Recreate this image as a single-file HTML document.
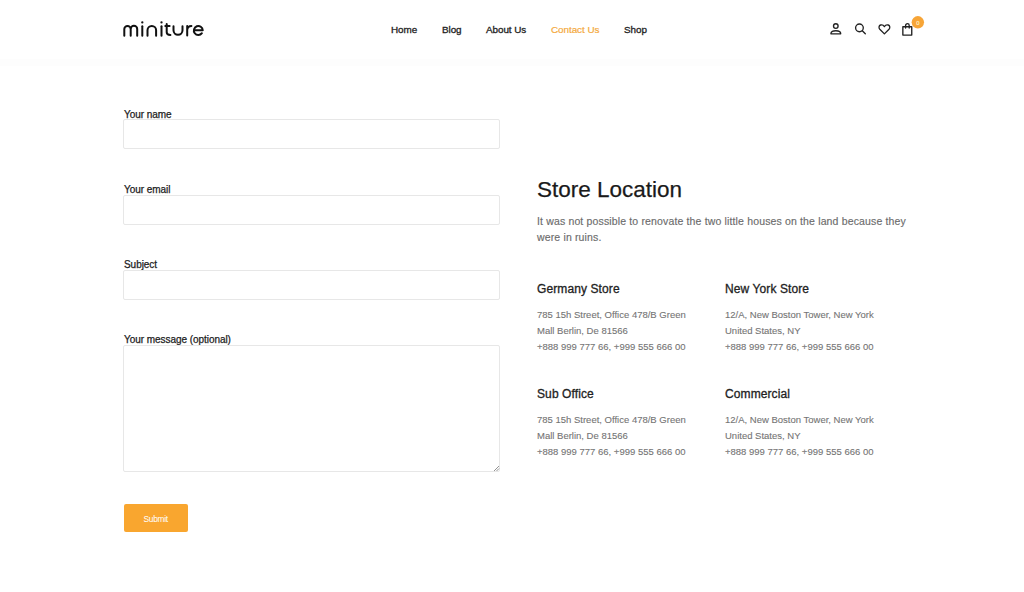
<!DOCTYPE html>
<html><head><meta charset="utf-8">
<style>
*{margin:0;padding:0;box-sizing:border-box}
html,body{width:1024px;height:592px;overflow:hidden;background:#fff;font-family:"Liberation Sans",sans-serif;color:#1b1b1b}
.abs{position:absolute;white-space:nowrap}
.hdr{position:absolute;left:0;top:59px;width:1024px;height:7px;background:#fdfdfd}
.nav{font-size:9.9px;line-height:12px;color:#222;font-weight:normal;-webkit-text-stroke:0.3px #222;margin-top:0.5px;letter-spacing:-0.05px}
.lbl{font-size:10px;line-height:12px;color:#222;-webkit-text-stroke:0.25px #222;margin-top:1px;letter-spacing:-0.05px}
.inp{position:absolute;left:123px;width:377px;height:30px;border:1px solid #e7e7e7;border-radius:2px}
.h2{font-size:22.5px;line-height:24px;color:#1a1a1a;-webkit-text-stroke:0.25px #1a1a1a}
.p{font-size:10.5px;line-height:16px;color:#6c6c6c;letter-spacing:0.15px;-webkit-text-stroke:0.15px #6c6c6c}
.h4{font-size:12px;line-height:14px;color:#222;-webkit-text-stroke:0.3px #222;margin-top:1px;letter-spacing:0.1px}
.ad{font-size:9.5px;line-height:16px;color:#747474;-webkit-text-stroke:0.1px #747474}
</style></head><body>
<div class="hdr"></div>
<!-- logo -->
<svg width="1024" height="61" style="position:absolute;left:0;top:0" viewBox="0 0 1024 61">
<g fill="none" stroke="#111" stroke-width="2" stroke-linecap="round" stroke-linejoin="round">
<path d="M124.3 35.8V29.1A3.2 3.2 0 0 1 130.7 29.1V35.8M130.7 29.1A3.25 3.25 0 0 1 137.2 29.1V35.8"/>
<path d="M142.3 26.2V35.8"/>
<path d="M147.5 35.8V30.25A4.3 4.3 0 0 1 156.1 30.25V35.8"/>
<path d="M161.5 26.2V35.8"/>
<path d="M166.7 24.1V32.2Q166.7 34.9 170.4 34.9M165.3 26.1H169.6"/>
<path d="M173.5 26.3V30.35A4.5 4.5 0 0 0 182.5 30.35V26.3"/>
<path d="M187.2 35.6V25.9M187.2 30Q187.6 25.9 191.4 25.9"/>
<path d="M194 30.3H202.75A4.45 4.55 0 1 0 201.9 33.2"/>
</g>
<g fill="#111"><circle cx="142.3" cy="22.4" r="1.15"/><circle cx="161.5" cy="22.4" r="1.15"/></g>
<g fill="none" stroke="#222" stroke-width="1.35" stroke-linecap="round" stroke-linejoin="round">
<circle cx="835.8" cy="26.05" r="2.3"/>
<path d="M830.9 33.8C830.9 31.6 833 30.7 835.8 30.7C838.6 30.7 840.7 31.6 840.7 33.8Z"/>
<circle cx="859.45" cy="27.85" r="3.85"/>
<path d="M862.3 30.8L865.3 33.8"/>
<path d="M884.4 33.9L879.8 29.2C878.5 27.8 878.8 25.5 880.6 25C882.2 24.6 883.6 25.3 884.4 26.6C885.2 25.3 886.6 24.6 888.2 25C890 25.5 890.3 27.8 889 29.2Z"/>
<path d="M902.85 26.7H911.75V35.05H902.85Z"/>
<path d="M905.6 28V25.5A1.8 1.8 0 0 1 909.2 25.5V28"/>
</g>
<circle cx="917.85" cy="22.3" r="6.2" fill="#f7a537"/>
<text x="917.9" y="24.7" font-family="Liberation Sans" font-size="5.8" fill="#fff2cc" stroke="#fff2cc" stroke-width="0.15" text-anchor="middle">0</text>
</svg>
<!-- nav -->
<div class="abs nav" id="n1" style="left:391px;top:23px">Home</div>
<div class="abs nav" id="n2" style="left:442px;top:23px">Blog</div>
<div class="abs nav" id="n3" style="left:486px;top:23px">About Us</div>
<div class="abs nav" id="n4" style="left:551px;top:23px;color:#f4a93c;-webkit-text-stroke:0.2px #f4a93c">Contact Us</div>
<div class="abs nav" id="n5" style="left:624px;top:23px">Shop</div>

<!-- form -->
<div class="abs lbl" id="l1" style="left:124px;top:108px">Your name</div>
<div class="inp" style="top:119px"></div>
<div class="abs lbl" id="l2" style="left:124px;top:183px">Your email</div>
<div class="inp" style="top:195px"></div>
<div class="abs lbl" id="l3" style="left:124px;top:258px">Subject</div>
<div class="inp" style="top:270px"></div>
<div class="abs lbl" id="l4" style="left:124px;top:333px">Your message (optional)</div>
<div class="inp" style="top:345px;height:127px"></div>
<div class="abs" style="left:124px;top:504px;width:64px;height:28px;background:#f9a62f;border-radius:2px"></div>
<div class="abs" id="sub" style="left:143px;top:514px;font-size:8.4px;line-height:10px;color:#fff;letter-spacing:-0.3px;margin-left:0.5px">Submit</div>
<svg width="8" height="8" style="position:absolute;left:492px;top:464px" viewBox="0 0 8 8"><path d="M7 2L2 7M7 4.5L4.5 7" stroke="#777" stroke-width="0.8" fill="none"/></svg>

<!-- right -->
<div class="abs h2" id="h2" style="left:537px;top:178px">Store Location</div>
<div class="abs p" id="p1" style="left:537px;top:213px">It was not possible to renovate the two little houses on the land because they</div>
<div class="abs p" id="p2" style="left:537px;top:229px">were in ruins.</div>

<div class="abs h4" style="left:537px;top:281px">Germany Store</div>
<div class="abs ad" style="left:537px;top:307px">785 15h Street, Office 478/B Green</div>
<div class="abs ad" style="left:537px;top:323px">Mall Berlin, De 81566</div>
<div class="abs ad" style="left:537px;top:339px">+888 999 777 66, +999 555 666 00</div>

<div class="abs h4" style="left:725px;top:281px">New York Store</div>
<div class="abs ad" style="left:725px;top:307px">12/A, New Boston Tower, New York</div>
<div class="abs ad" style="left:725px;top:323px">United States, NY</div>
<div class="abs ad" style="left:725px;top:339px">+888 999 777 66, +999 555 666 00</div>

<div class="abs h4" style="left:537px;top:386px">Sub Office</div>
<div class="abs ad" style="left:537px;top:412px">785 15h Street, Office 478/B Green</div>
<div class="abs ad" style="left:537px;top:428px">Mall Berlin, De 81566</div>
<div class="abs ad" style="left:537px;top:444px">+888 999 777 66, +999 555 666 00</div>

<div class="abs h4" style="left:725px;top:386px">Commercial</div>
<div class="abs ad" style="left:725px;top:412px">12/A, New Boston Tower, New York</div>
<div class="abs ad" style="left:725px;top:428px">United States, NY</div>
<div class="abs ad" style="left:725px;top:444px">+888 999 777 66, +999 555 666 00</div>
</body></html>
